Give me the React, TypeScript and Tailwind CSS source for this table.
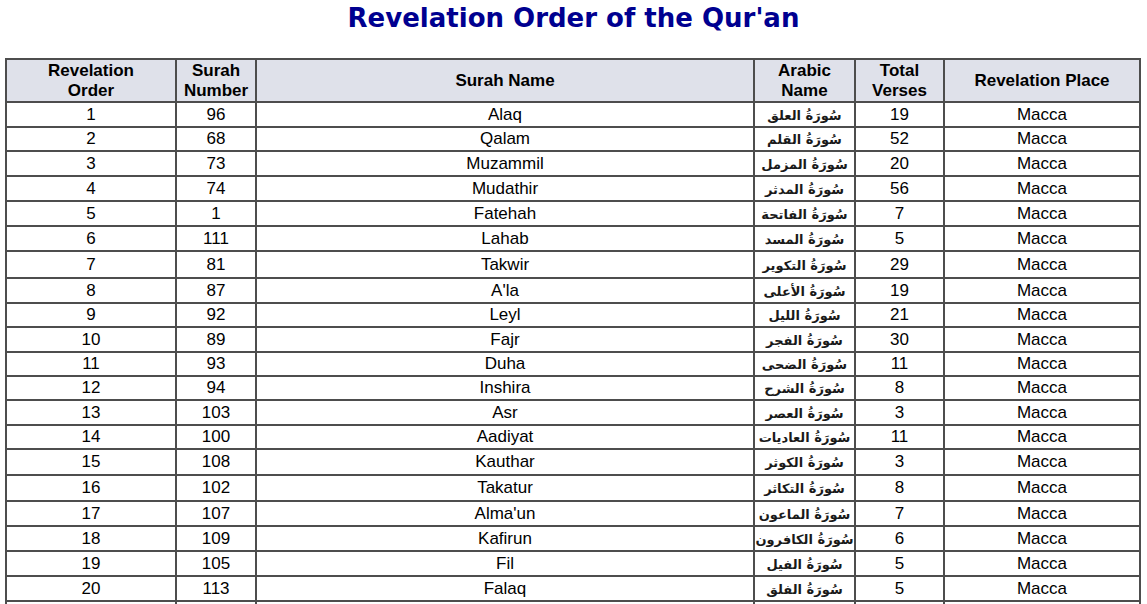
import React from "react";

type Row = { o: number; n: number; name: string; ar: string; v: number; h: string };

const rows: Row[] = [
  { o: 1, n: 96, name: "Alaq", ar: "سُورَةُ العلق", v: 19, h: "h-[25px]" },
  { o: 2, n: 68, name: "Qalam", ar: "سُورَةُ القلم", v: 52, h: "h-[24px]" },
  { o: 3, n: 73, name: "Muzammil", ar: "سُورَةُ المزمل", v: 20, h: "h-[25px]" },
  { o: 4, n: 74, name: "Mudathir", ar: "سُورَةُ المدثر", v: 56, h: "h-[25px]" },
  { o: 5, n: 1, name: "Fatehah", ar: "سُورَةُ الفاتحة", v: 7, h: "h-[25px]" },
  { o: 6, n: 111, name: "Lahab", ar: "سُورَةُ المسد", v: 5, h: "h-[25px]" },
  { o: 7, n: 81, name: "Takwir", ar: "سُورَةُ التكوير", v: 29, h: "h-[27px]" },
  { o: 8, n: 87, name: "A'la", ar: "سُورَةُ الأعلى", v: 19, h: "h-[25px]" },
  { o: 9, n: 92, name: "Leyl", ar: "سُورَةُ الليل", v: 21, h: "h-[24px]" },
  { o: 10, n: 89, name: "Fajr", ar: "سُورَةُ الفجر", v: 30, h: "h-[25px]" },
  { o: 11, n: 93, name: "Duha", ar: "سُورَةُ الضحى", v: 11, h: "h-[24px]" },
  { o: 12, n: 94, name: "Inshira", ar: "سُورَةُ الشرح", v: 8, h: "h-[24px]" },
  { o: 13, n: 103, name: "Asr", ar: "سُورَةُ العصر", v: 3, h: "h-[25px]" },
  { o: 14, n: 100, name: "Aadiyat", ar: "سُورَةُ العاديات", v: 11, h: "h-[24px]" },
  { o: 15, n: 108, name: "Kauthar", ar: "سُورَةُ الكوثر", v: 3, h: "h-[26px]" },
  { o: 16, n: 102, name: "Takatur", ar: "سُورَةُ التكاثر", v: 8, h: "h-[26px]" },
  { o: 17, n: 107, name: "Alma'un", ar: "سُورَةُ الماعون", v: 7, h: "h-[25px]" },
  { o: 18, n: 109, name: "Kafirun", ar: "سُورَةُ الكافرون", v: 6, h: "h-[25px]" },
  { o: 19, n: 105, name: "Fil", ar: "سُورَةُ الفيل", v: 5, h: "h-[25px]" },
  { o: 20, n: 113, name: "Falaq", ar: "سُورَةُ الفلق", v: 5, h: "h-[25px]" },
];

const cell = "border-2 border-[#4d4d4d] p-0 text-center align-middle";

export default function App() {
  return (
    <div className="h-[604px] overflow-hidden bg-white" style={{ fontFamily: '"Liberation Sans", Arial, sans-serif' }}>
      <h1
        className="pt-[3px] text-center text-[26px] font-bold leading-[30px] text-[#000090]"
        style={{ fontFamily: '"DejaVu Sans", Verdana, sans-serif' }}
      >
        Revelation Order of the Qur'an
      </h1>
      <div className="pt-[25px] pl-[5px]">
        <table className="w-[1134px] table-fixed border-collapse text-[17px] leading-[20px] text-black">
          <colgroup>
            <col className="w-[170px]" />
            <col className="w-[80px]" />
            <col className="w-[498px]" />
            <col className="w-[101px]" />
            <col className="w-[89px]" />
            <col className="w-[196px]" />
          </colgroup>
          <thead>
            <tr className="h-[43px] bg-[#dfe1ea] font-bold">
              <th className={cell}>Revelation<br />Order</th>
              <th className={cell}>Surah<br />Number</th>
              <th className={cell}>Surah Name</th>
              <th className={cell}>Arabic<br />Name</th>
              <th className={cell}>Total<br />Verses</th>
              <th className={cell}>Revelation Place</th>
            </tr>
          </thead>
          <tbody>
            {rows.map((r) => (
              <tr key={r.o} className={r.h}>
                <td className={cell}>{r.o}</td>
                <td className={cell}>{r.n}</td>
                <td className={cell}>{r.name}</td>
                <td className={cell}>
                  <span
                    dir="rtl"
                    className="whitespace-nowrap text-[13px] font-bold leading-[18px] text-[#1a1a1a]"
                    style={{ fontFamily: '"DejaVu Sans", "Noto Sans", sans-serif' }}
                  >
                    {r.ar}
                  </span>
                </td>
                <td className={cell}>{r.v}</td>
                <td className={cell}>Macca</td>
              </tr>
            ))}
            <tr className="h-[25px]">
              <td className={cell}></td>
              <td className={cell}></td>
              <td className={cell}></td>
              <td className={cell}></td>
              <td className={cell}></td>
              <td className={cell}></td>
            </tr>
          </tbody>
        </table>
      </div>
    </div>
  );
}
